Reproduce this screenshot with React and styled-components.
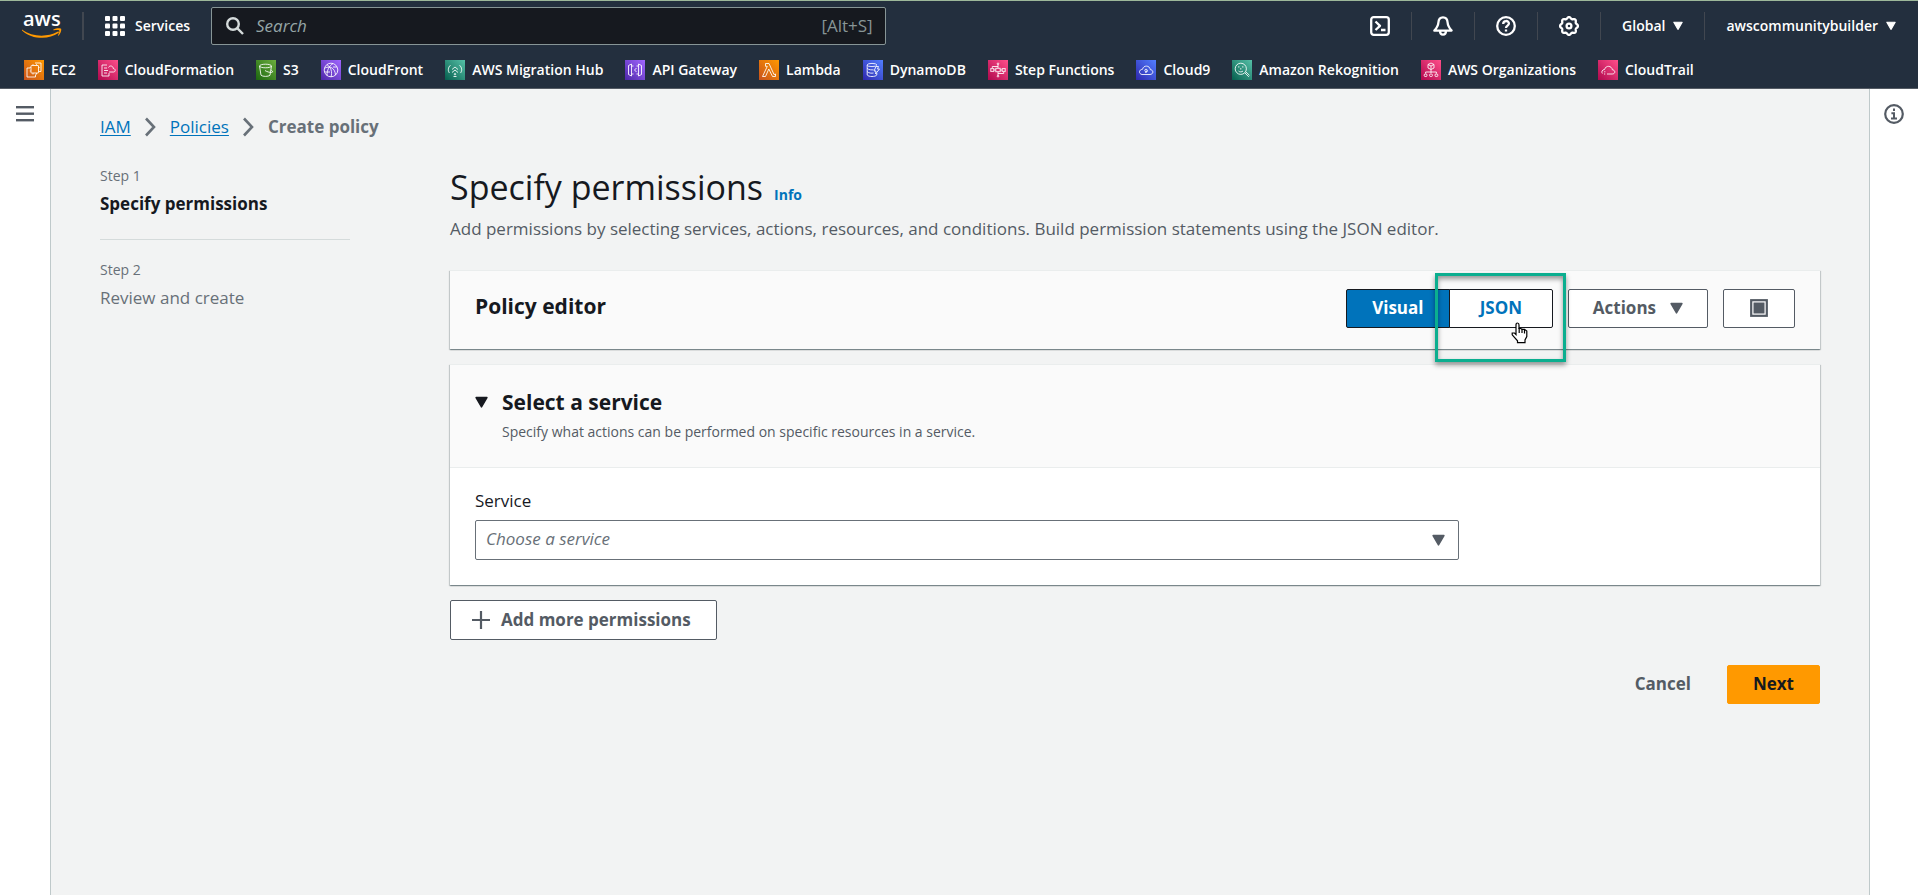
import React from 'react';
import styled, { createGlobalStyle, css } from 'styled-components';

const GlobalStyle = createGlobalStyle`
  *, *::before, *::after { box-sizing: border-box; }
  body {
    margin: 0;
    background: #f2f3f3;
    color: #16191f;
    font: 400 17px/28px "Open Sans", "Noto Sans", sans-serif;
  }
  button, input, select { font: inherit; color: inherit; }
  h1, h2, p, ol, ul { margin: 0; padding: 0; }
  ol, ul { list-style: none; }
  svg { display: block; flex: none; }
`;

/* ---------- Header ---------- */

const Header = styled.header`
  background: #232f3e;
  color: #fff;
  border-top: 1px solid #9db89a;
  border-bottom: 1px solid #545b64;
  font-size: 14px;
  font-weight: 600;
`;

const TopBar = styled.div`
  display: flex;
  align-items: center;
  height: 50px;
  padding: 0 22px;
`;

const Divider = styled.span`
  flex: none;
  width: ${(p) => (p.$wide ? '2px' : '1px')};
  height: 28px;
  background: #414750;
`;

const LogoLink = styled.a`
  display: block;
  margin-right: 20px;
`;

const BarButton = styled.button`
  display: flex;
  align-items: center;
  gap: 8px;
  padding: 0;
  border: 0;
  background: none;
  cursor: pointer;
`;

const ServicesButton = styled(BarButton)`
  gap: 10px;
  margin: 0 21px;
`;

const SearchBox = styled.label`
  display: flex;
  align-items: center;
  gap: 12px;
  width: 36%;
  height: 38px;
  padding: 0 12px 0 14px;
  background: #16191f;
  border: 1px solid #879596;
  border-radius: 2px;
  color: #879596;
  font-size: 17px;
  font-weight: 400;
`;

const SearchInput = styled.input`
  flex: 1;
  min-width: 0;
  padding: 0;
  border: 0;
  outline: 0;
  background: none;
  &::placeholder { color: #95a5a6; font-style: italic; opacity: 1; }
`;

const Tools = styled.div`
  display: flex;
  align-items: center;
  gap: 21px;
  margin-left: auto;
`;

const Favorites = styled.nav`
  display: flex;
  align-items: center;
  gap: 22px;
  height: 37px;
  padding: 1px 24px 0;
`;

const Favorite = styled.a`
  display: flex;
  align-items: center;
  gap: 7px;
  color: inherit;
  text-decoration: none;
  white-space: nowrap;
`;

const tones = {
  orange: '#c8511b, #ff9900',
  pink: '#b0084d, #ff4f8b',
  green: '#1b660f, #6cae3e',
  purple: '#4d27a8, #a166ff',
  teal: '#055f4e, #56c0a7',
  blue: '#2e27ad, #527fff',
};

const ServiceTile = styled.span`
  display: grid;
  place-items: center;
  width: 20px;
  height: 20px;
  background: linear-gradient(45deg, ${(p) => tones[p.$tone]});
`;

/* ---------- Page frame ---------- */

const Body = styled.div`
  display: flex;
  min-height: calc(100vh - 89px);
`;

const SideRail = styled.aside`
  flex: none;
  display: flex;
  justify-content: center;
  align-items: flex-start;
  width: ${(p) => (p.$right ? '49px' : '51px')};
  padding-top: 15px;
  background: #fff;
  border: 0 solid #bfc9ca;
  ${(p) => (p.$right ? css`border-left-width: 1px;` : css`border-right-width: 1px;`)}
`;

const RailButton = styled.button`
  padding: 0;
  border: 0;
  background: none;
  cursor: pointer;
`;

const Main = styled.main`
  flex: 1;
  min-width: 0;
  padding: 24px 49px 0;
`;

const Breadcrumbs = styled.nav`
  display: flex;
  align-items: center;
  gap: 14px;
  margin-bottom: 24px;
`;

const Crumb = styled.a`
  color: #0073bb;
  text-decoration: underline;
  text-underline-offset: 2px;
`;

const CurrentCrumb = styled.span`
  color: #687078;
  font-weight: 700;
`;

const Columns = styled.div`
  display: grid;
  grid-template-columns: 250px minmax(0, 1fr);
  gap: 100px;
`;

/* ---------- Wizard steps ---------- */

const Steps = styled.ol`
  padding-top: 1px;
`;

const Step = styled.li`
  & + & {
    margin-top: 21px;
    padding-top: 20px;
    border-top: 1px solid #d5dbdb;
  }
`;

const StepNumber = styled.div`
  margin-bottom: 4px;
  color: #687078;
  font-size: 14px;
  line-height: 20px;
`;

const StepName = styled.div`
  color: ${(p) => (p.$active ? '#16191f' : '#687078')};
  font-weight: ${(p) => (p.$active ? 700 : 400)};
`;

/* ---------- Content ---------- */

const TitleRow = styled.div`
  display: flex;
  align-items: baseline;
  gap: 11px;
`;

const Title = styled.h1`
  font-size: 34px;
  font-weight: 400;
  line-height: 44px;
`;

const InfoLink = styled.a`
  color: #0073bb;
  font-size: 14px;
  font-weight: 700;
  line-height: 20px;
  text-decoration: none;
`;

const Description = styled.p`
  margin: 6px 0 27px;
  color: #545b64;
`;

const Card = styled.section`
  margin-bottom: 15px;
  background: #fff;
  border-top: 1px solid #eaeded;
  box-shadow: 0 1px 1px rgba(0, 28, 36, 0.3), 1px 1px 1px rgba(0, 28, 36, 0.15),
    -1px 1px 1px rgba(0, 28, 36, 0.15);
`;

const EditorHeader = styled.div`
  display: flex;
  justify-content: space-between;
  padding: 18px 25px 21px;
  background: #fafafa;
`;

const Heading = styled.h2`
  font-size: 21px;
  font-weight: 700;
  line-height: ${(p) => (p.$tall ? '34px' : '28px')};
`;

const Controls = styled.div`
  display: flex;
  gap: 15px;
`;

const Segments = styled.div`
  display: flex;
`;

const Segment = styled.button`
  width: 104px;
  height: 39px;
  padding: 0 0 1px;
  border: 1px solid #16191f;
  border-radius: ${(p) => (p.$selected ? '2px 0 0 2px' : '0 2px 2px 0')};
  background: ${(p) => (p.$selected ? '#0073bb' : '#fff')};
  color: ${(p) => (p.$selected ? '#fff' : '#0073bb')};
  font-weight: 700;
  cursor: pointer;
`;

const HighlightedSegment = styled.div`
  position: relative;
  margin-left: -1px;
`;

const Highlight = styled.span`
  position: absolute;
  inset: -16px -13px -34px -14px;
  border: 3px solid #0bae8f;
  box-shadow: 0 3px 5px rgba(0, 0, 0, 0.4), inset 0 3px 5px rgba(0, 0, 0, 0.4);
  pointer-events: none;
`;

const Pointer = styled.svg`
  position: absolute;
  left: 62px;
  top: 33px;
  pointer-events: none;
`;

const Button = styled.button`
  display: inline-flex;
  align-items: center;
  justify-content: center;
  gap: 14px;
  height: 39px;
  padding: 0 24px 1px;
  border: 1px solid #545b64;
  border-radius: 2px;
  background: #fff;
  color: #545b64;
  font-weight: 700;
  cursor: pointer;
`;

const AddButton = styled(Button)`
  height: 40px;
  padding: 0 25px 1px 21px;
  gap: 11px;
`;

const PrimaryButton = styled(Button)`
  padding: 0 25px 1px;
  border-color: #ff9900;
  background: #ff9900;
  color: #16191f;
`;

const LinkButton = styled(Button)`
  padding: 0 10px 1px;
  border-color: transparent;
  background: none;
`;

const ServiceHeader = styled.div`
  display: flex;
  gap: 14px;
  padding: 23px 25px 25px;
  background: #fafafa;
  border-bottom: 1px solid #eaeded;
`;

const ExpandButton = styled.button`
  display: flex;
  align-items: center;
  height: 28px;
  padding: 0;
  border: 0;
  background: none;
  cursor: pointer;
`;

const Hint = styled.p`
  margin-top: 6px;
  color: #545b64;
  font-size: 14px;
  line-height: 20px;
`;

const ServiceForm = styled.div`
  padding: 19px 25px 25px;
`;

const Label = styled.label`
  display: block;
  margin-bottom: 5px;
`;

const SelectWrap = styled.div`
  display: grid;
  align-items: center;
  width: calc(75% - 6px);
  & > * { grid-area: 1 / 1; }
  & > svg { justify-self: end; margin-right: 14px; pointer-events: none; }
`;

const Select = styled.select`
  width: 100%;
  height: 40px;
  padding: 0 40px 2px 10px;
  border: 1px solid #687078;
  border-radius: 2px;
  appearance: none;
  background: #fff;
  color: #687078;
  font-style: italic;
`;

const Footer = styled.footer`
  display: flex;
  justify-content: flex-end;
  gap: 25px;
  margin-top: 25px;
`;

/* ---------- Drawings ---------- */

const Caret = ({ size = 13, color = 'currentColor' }) => (
  <svg width={size} height={size} viewBox="0 0 12 12" aria-hidden="true">
    <path d="M1 1.5h10L6 10z" fill={color} stroke={color} strokeWidth="1.4" strokeLinejoin="round" />
  </svg>
);

const Chevron = () => (
  <svg width="11" height="20" viewBox="0 0 11 20" fill="none" stroke="#687078" strokeWidth="2.6" aria-hidden="true">
    <path d="M1 1.5L9 10L1 18.5" />
  </svg>
);

const Logo = () => (
  <svg width="40" height="46" viewBox="0 -10 40 46" role="img" aria-label="aws">
    <text x="1" y="13" fill="#fff" fontFamily="Open Sans" fontWeight="600" fontSize="20">aws</text>
    <path d="M0 16.5C10 24 25 24.5 35.5 18.8C36.8 18 37.6 19.2 36.4 20.1C26 27.5 9 26 0 17.4z" fill="#ff9900" />
    <path d="M31.5 16.5C34 14.9 38.6 14.9 39.1 15.8C39.6 16.8 38.8 20.6 36.6 22.6C36 23 35.7 22.8 36 22.2C36.8 20.3 37.7 18.2 37.2 17.5C36.7 16.9 34 17 32 17.2C31.2 17.2 31 16.9 31.5 16.5z" fill="#ff9900" />
  </svg>
);

const AppsGrid = () => (
  <svg width="20" height="20" viewBox="0 0 20 20" fill="#fff" aria-hidden="true">
    {[0, 7.5, 15].map((y) => [0, 7.5, 15].map((x) => <rect key={`${x}-${y}`} x={x} y={y} width="5" height="5" rx="1" />))}
  </svg>
);

const SearchIcon = () => (
  <svg width="18" height="18" viewBox="0 0 18 18" fill="none" stroke="#d5dbdb" strokeWidth="2.4" aria-hidden="true">
    <circle cx="7" cy="7" r="5.8" />
    <path d="M11.2 11.2L17 17" />
  </svg>
);

const lobes = Array.from({ length: 96 }, (_, i) => {
  const a = (i / 96) * Math.PI * 2;
  const r = 8.2 + 0.8 * Math.cos(a * 8);
  return `${(10 + r * Math.cos(a)).toFixed(2)} ${(10 + r * Math.sin(a)).toFixed(2)}`;
}).join('L');

const toolIcons = {
  CloudShell: (
    <>
      <rect x="1.2" y="1.2" width="17.6" height="17.6" rx="2.5" />
      <path d="M5.5 5.5L10 9.8L5.5 14M11 14h4.5" />
    </>
  ),
  Notifications: (
    <path d="M10 1.4C7 1.4 5.6 3.5 5.4 6.5C5.2 10 3.8 11.8 1.4 14.6H18.6C16.2 11.8 14.8 10 14.6 6.5C14.4 3.5 13 1.4 10 1.4zM7 14.8C7 20 13 20 13 14.8" />
  ),
  Help: (
    <>
      <circle cx="10" cy="10" r="8.8" />
      <path d="M7.2 8C7.2 4 12.9 4.2 12.9 7.6C12.9 9.6 10 9.6 10 12M10 13.4v2" />
    </>
  ),
  Settings: (
    <>
      <path d={`M${lobes}z`} />
      <circle cx="10" cy="10" r="2.4" />
    </>
  ),
};

const ToolIcon = ({ name }) => (
  <svg width="20" height="20" viewBox="0 0 20 20" fill="none" stroke="#fff" strokeWidth="2.3" strokeLinejoin="round" aria-hidden="true">
    {toolIcons[name]}
  </svg>
);

const favorites = [
  ['EC2', 'orange', <><rect x="5" y="3.5" width="7.5" height="7.5" rx=".5" /><path d="M9 1H15V9.5H13M4 6H1V15H9.5V12.5M7 2.2v1M10.5 2.2v1M3.8 5.5h1M3.8 9h1M7 11v1.5M10.5 11v1.5M12.6 5.5h1" /></>],
  ['CloudFormation', 'pink', <path d="M7 3H2V14H9V11M4 6h3M4 8.5h4M4 11h3M9 10H13.5C15.8 10 15.8 6.8 13.3 6.5C13 3.5 9.5 3.2 8.5 5.5" />],
  ['S3', 'green', <><ellipse cx="7.5" cy="4" rx="6" ry="1.8" /><path d="M1.5 4L3 13.2C4.5 14.8 10.5 14.8 12 13.2L13.5 4M7 8.5C10 10.5 14.5 11 14.7 9.8C14.8 9 13 8.2 12.8 8" /></>],
  ['CloudFront', 'purple', <><circle cx="8" cy="8" r="6.8" /><path d="M4 13.5C4 8 6 4 10 1.5M2 6C7 3.5 12 6 12.5 13M8 15C9.5 10 8 5 4 2.6M1.5 10H7M10 5h4" /></>],
  ['AWS Migration Hub', 'teal', <><path d="M3.5 3.2C.8 5.5.8 9 2.5 11M12.5 3.2C15.2 5.5 15.2 9 13.5 11M6.5 14.5h3M5 7.5L8 5L11 7.5M5 10.5L8 8L11 10.5" /><circle cx="8" cy="12.2" r=".7" /></>],
  ['API Gateway', 'purple', <path d="M4.5 2L1.5 3.5V12.5L4.5 14zM11.5 2L14.5 3.5V12.5L11.5 14zM4.5 4H6.5M9.5 4h2M4.5 12H6.5M9.5 12h2M9.5 6L7.5 8L9.5 10" />],
  ['Lambda', 'orange', <path d="M4.5 1.5H8L13 12.5L14.5 12V14.5H11.5L7.8 7L4.5 14.5H1.5L6.3 4.3H4.5z" />],
  ['DynamoDB', 'blue', <><ellipse cx="7" cy="3" rx="4.8" ry="1.6" /><path d="M2.2 3V13C3.5 15 10.5 15 11.8 13V11M2.2 6.3C3.5 8 7 8 8.5 7.8M2.2 9.6C3.5 11.2 7 11.4 8.5 11M11 4.5L9 9H11L10.5 12L14.5 7H12.5L13.5 4.5z" /></>],
  ['Step Functions', 'pink', <><rect x="5.8" y="6.3" width="4.4" height="3.4" /><rect x=".8" y="6.6" width="3" height="2.8" /><rect x="12.2" y="6.6" width="3" height="2.8" /><circle cx="8" cy="1.8" r=".8" /><circle cx="8" cy="14.2" r=".8" /><path d="M8 2.6v3.6M8 9.8v3.6M3.8 8h2M10.2 8h2M2.3 6V4.5H8M13.7 10v1.5H8" /></>],
  ['Cloud9', 'blue', <><path d="M4 12.5H12C16 12.2 15.5 7.8 12.3 7.6C11.8 3.2 5.4 2.8 4.5 7.3C.6 7.5.6 12 4 12.5z" /><circle cx="8" cy="8.4" r="1.2" /><path d="M9.2 8.4C9.2 10 8.8 10.6 7.2 10.6" /></>],
  ['Amazon Rekognition', 'teal', <><circle cx="6.8" cy="6.8" r="5.6" /><path d="M11 11L14.8 14.8M4.5 9C5.8 10.2 7.8 10.2 9 9M4.8 4.2v1.4M8.8 4.2v1.4M6.8 6v1.6M12 10L15.5 13.4" /></>],
  ['AWS Organizations', 'pink', <><path d="M8 1L11 2.5V6L8 7.5L5 6V2.5zM5 2.5L8 4L11 2.5M8 4V11M2.6 11.5V10H13.4V11.5" /><rect x="1.2" y="12" width="2.8" height="2.5" rx="1" /><rect x="6.6" y="12" width="2.8" height="2.5" rx="1" /><rect x="12" y="12" width="2.8" height="2.5" rx="1" /></>],
  ['CloudTrail', 'pink', <path d="M7 12H12.3C15.8 11.8 15.4 8 12.4 7.8C11.8 3.5 5.6 3 4.6 7.5C2 7.6 1.2 10 2.4 11.5M4 12h1.2M4.2 9.8h1.2" />],
];

const HandCursor = () => (
  <Pointer width="17" height="22" viewBox="0 0 17 22" aria-hidden="true">
    <path
      d="M6.5 1C7.6 1 8 1.8 8 3V6.5H9.5L11.5 7.3H13.5L15.8 9V14.5L14 18V20.7H6.5V18.8L1.2 12.8V11H3.5L5 12.5V3C5 1.8 5.4 1 6.5 1z"
      fill="#fff" stroke="#000" strokeWidth="1.2"
    />
    <path d="M8.2 6v5M11 7v4M13.5 8v3.5" stroke="#000" strokeWidth="1.2" />
  </Pointer>
);

export default function App() {
  return (
    <>
      <GlobalStyle />
      <Header>
        <TopBar>
          <LogoLink href="#"><Logo /></LogoLink>
          <Divider $wide />
          <ServicesButton type="button"><AppsGrid />Services</ServicesButton>
          <SearchBox>
            <SearchIcon />
            <SearchInput type="search" placeholder="Search" aria-label="Search" />
            <span>[Alt+S]</span>
          </SearchBox>
          <Tools>
            {Object.keys(toolIcons).map((name) => (
              <React.Fragment key={name}>
                <BarButton type="button" aria-label={name}><ToolIcon name={name} /></BarButton>
                <Divider />
              </React.Fragment>
            ))}
            <BarButton type="button">Global<Caret size={10} /></BarButton>
            <Divider />
            <BarButton type="button">awscommunitybuilder<Caret size={10} /></BarButton>
          </Tools>
        </TopBar>
        <Favorites aria-label="Favorite services">
          {favorites.map(([name, tone, art]) => (
            <Favorite key={name} href="#">
              <ServiceTile $tone={tone}>
                <svg width="16" height="16" viewBox="0 0 16 16" fill="none" stroke="#fff" strokeOpacity=".85" strokeWidth="1" aria-hidden="true">{art}</svg>
              </ServiceTile>
              {name}
            </Favorite>
          ))}
        </Favorites>
      </Header>

      <Body>
        <SideRail>
          <RailButton type="button" aria-label="Open navigation">
            <svg width="18" height="20" viewBox="0 0 18 20" fill="#545b64">
              <rect y="2" width="18" height="2.4" /><rect y="8.5" width="18" height="2.4" /><rect y="15" width="18" height="2.4" />
            </svg>
          </RailButton>
        </SideRail>

        <Main>
          <Breadcrumbs aria-label="Breadcrumbs">
            <Crumb href="#">IAM</Crumb>
            <Chevron />
            <Crumb href="#">Policies</Crumb>
            <Chevron />
            <CurrentCrumb>Create policy</CurrentCrumb>
          </Breadcrumbs>

          <Columns>
            <Steps>
              <Step>
                <StepNumber>Step 1</StepNumber>
                <StepName $active>Specify permissions</StepName>
              </Step>
              <Step>
                <StepNumber>Step 2</StepNumber>
                <StepName>Review and create</StepName>
              </Step>
            </Steps>

            <div>
              <TitleRow>
                <Title>Specify permissions</Title>
                <InfoLink href="#">Info</InfoLink>
              </TitleRow>
              <Description>
                Add permissions by selecting services, actions, resources, and conditions. Build permission statements using the JSON editor.
              </Description>

              <Card>
                <EditorHeader>
                  <Heading $tall>Policy editor</Heading>
                  <Controls>
                    <Segments>
                      <Segment type="button" $selected>Visual</Segment>
                      <HighlightedSegment>
                        <Segment type="button">JSON</Segment>
                        <Highlight />
                        <HandCursor />
                      </HighlightedSegment>
                    </Segments>
                    <Button type="button">Actions<Caret /></Button>
                    <Button type="button" aria-label="Full screen">
                      <svg width="22" height="18" viewBox="0 0 22 18">
                        <rect x="3.2" y="1.2" width="15.6" height="15.6" fill="none" stroke="#545b64" strokeWidth="2.2" />
                        <rect x="5.5" y="3.5" width="11" height="11" fill="#545b64" />
                      </svg>
                    </Button>
                  </Controls>
                </EditorHeader>
              </Card>

              <Card>
                <ServiceHeader>
                  <ExpandButton type="button" aria-label="Collapse section"><Caret /></ExpandButton>
                  <div>
                    <Heading>Select a service</Heading>
                    <Hint>Specify what actions can be performed on specific resources in a service.</Hint>
                  </div>
                </ServiceHeader>
                <ServiceForm>
                  <Label htmlFor="service">Service</Label>
                  <SelectWrap>
                    <Select id="service" defaultValue="">
                      <option value="">Choose a service</option>
                    </Select>
                    <Caret color="#545b64" />
                  </SelectWrap>
                </ServiceForm>
              </Card>

              <AddButton type="button">
                <svg width="18" height="18" viewBox="0 0 18 18" stroke="#545b64" strokeWidth="2.2"><path d="M9 0v18M0 9h18" /></svg>
                Add more permissions
              </AddButton>

              <Footer>
                <LinkButton type="button">Cancel</LinkButton>
                <PrimaryButton type="button">Next</PrimaryButton>
              </Footer>
            </div>
          </Columns>
        </Main>

        <SideRail $right>
          <RailButton type="button" aria-label="Open help panel">
            <svg width="20" height="20" viewBox="0 0 20 20" fill="none" stroke="#545b64" strokeWidth="2.2">
              <circle cx="10" cy="10" r="8.8" />
              <path d="M10 4.5v2.4M7.4 9.2H10v4.6M7 14.4h6" strokeWidth="2" />
            </svg>
          </RailButton>
        </SideRail>
      </Body>
    </>
  );
}
